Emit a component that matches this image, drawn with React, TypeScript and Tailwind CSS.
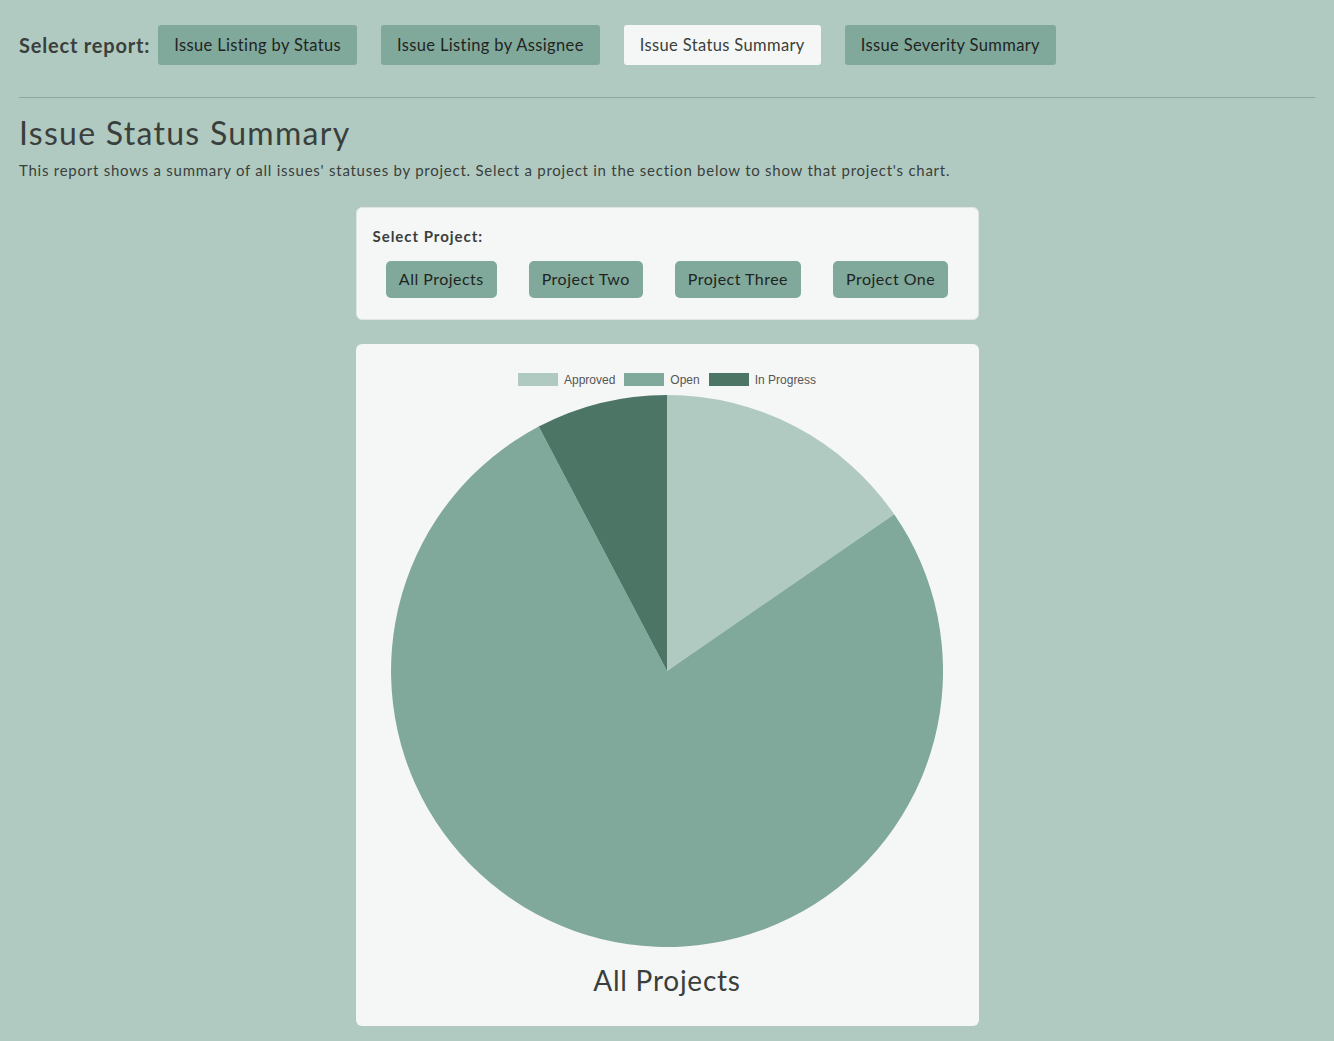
const reports = [
  'Issue Listing by Status',
  'Issue Listing by Assignee',
  'Issue Status Summary',
  'Issue Severity Summary',
]

const projects = ['All Projects', 'Project Two', 'Project Three', 'Project One']

const legend = [
  { label: 'Approved', color: 'bg-[#b0cac1]' },
  { label: 'Open', color: 'bg-[#80a99b]' },
  { label: 'In Progress', color: 'bg-[#4d7566]' },
]

function PieChart() {
  return (
    <svg width="552" height="552" viewBox="0 0 552 552">
      <path d="M276 276 L276 0 A276 276 0 0 1 503.2 119.2 Z" fill="#b0cac1" />
      <path d="M276 276 L503.2 119.2 A276 276 0 1 1 147.7 31.6 Z" fill="#80a99b" />
      <path d="M276 276 L147.7 31.6 A276 276 0 0 1 276 0 Z" fill="#4d7566" />
    </svg>
  )
}

export default function App() {
  const active = 'Issue Status Summary'

  return (
    <div className="min-h-[1041px] bg-[#b0cac1] px-[19px] pb-4 font-['Lato',sans-serif] text-[#3a3f3c]">
      {/* Report picker */}
      <div className="flex items-center pt-[25px]">
        <span className="mr-2 text-[20px] font-bold tracking-[0.04em]">Select report:</span>
        <div className="flex gap-6">
          {reports.map((r) => (
            <button
              key={r}
              className={
                r === active
                  ? 'h-10 rounded-[3px] bg-[#f5f7f6] px-4 text-[16.5px] tracking-[0.022em] text-[#3a3f3c]'
                  : 'h-10 rounded-[3px] bg-[#80a99b] px-4 text-[16.5px] tracking-[0.022em] text-[#1f2421]'
              }
            >
              {r}
            </button>
          ))}
        </div>
      </div>

      <hr className="mt-8 border-t border-[#8fa89f]" />

      <h1 className="mt-[16px] text-[32px] leading-[38px] tracking-[0.04em]">Issue Status Summary</h1>
      <p className="mt-[8px] text-[15px] leading-5 tracking-[0.05em]">
        This report shows a summary of all issues' statuses by project. Select a project in the section below to show that project's chart.
      </p>

      {/* Project picker */}
      <div className="mx-auto mt-[27px] w-[623px] rounded-md border border-[#dfe5e2] bg-[#f5f7f6] px-4 pb-[21px] pt-[17px]">
        <div className="text-[15px] font-bold tracking-[0.065em]">Select Project:</div>
        <div className="mt-[13px] flex justify-center gap-8">
          {projects.map((p) => (
            <button
              key={p}
              className="h-[37px] rounded-[5px] bg-[#80a99b] px-[13px] text-[16px] tracking-[0.03em] text-[#1f2421]"
            >
              {p}
            </button>
          ))}
        </div>
      </div>

      {/* Chart */}
      <div className="mx-auto mt-6 flex w-[623px] flex-col items-center rounded-md bg-[#f5f7f6] pb-[28px] pt-[28px]">
        <div className="flex h-4 items-center gap-[9px] font-['Liberation_Sans',Arial,sans-serif] text-[12px] text-[#555]">
          {legend.map((l) => (
            <div key={l.label} className="flex items-center gap-[6px]">
              <span className={`h-[13px] w-[40px] ${l.color}`} />
              <span>{l.label}</span>
            </div>
          ))}
        </div>
        <div className="mt-[7px] flex">
          <PieChart />
        </div>
        <div className="mt-[15px] text-[28px] leading-[36px] tracking-[0.027em]">All Projects</div>
      </div>
    </div>
  )
}
